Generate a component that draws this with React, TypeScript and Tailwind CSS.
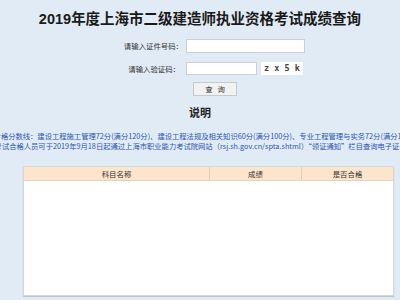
const cjk = { fontFamily: '"Noto Sans CJK SC", "Liberation Sans", sans-serif' };

const notes = [
  { text: "一、合格分数线：建设工程施工管理72分(满分120分)、建设工程法规及相关知识60分(满分100分)、专业工程管理与实务72分(满分120分)。", shift: "ml-[-21px]" },
  { text: "二、考试合格人员可于2019年9月18日起通过上海市职业能力考试院网站（rsj.sh.gov.cn/spta.shtml）“领证通知”栏目查询电子证书。", shift: "ml-[-20px]" },
];

export default function App() {
  return (
    <div className="h-[300px] w-[400px] overflow-hidden bg-[#e1ebf5] text-[#222]" style={cjk}>
      <h1 className="pt-[9px] text-center text-[14.5px] font-bold leading-[18px] text-[#1a1a1a]">
        <span style={{ fontFamily: '"Liberation Sans", sans-serif' }}>2019</span>年度上海市二级建造师执业资格考试成绩查询
      </h1>

      <div className="mt-[11px] flex flex-col gap-[9px]">
        <div className="flex items-center">
          <label className="w-[183px] text-right text-[7.4px] leading-[14px] text-[#333]">请输入证件号码：</label>
          <input className="ml-[3px] h-[14px] w-[119px] border border-[#c8d0d8] bg-white" />
        </div>
        <div className="flex items-center">
          <label className="w-[180px] text-right text-[7.4px] leading-[13px] text-[#333]">请输入验证码：</label>
          <input className="ml-[6px] h-[13px] w-[71px] border border-[#c8d0d8] bg-white" />
          <span className="ml-[4px] flex h-[13px] w-[42px] items-center justify-center whitespace-nowrap bg-white text-[8.5px] font-bold leading-[13px] text-[#444]" style={{ fontFamily: '"DejaVu Sans Mono", monospace' }}>z x 5 k</span>
        </div>
        <div className="ml-[193px] mt-[-2px]">
          <button className="block h-[14px] w-[44px] border border-[#c9c9c9] bg-[#f2f2f2] text-[7.4px] leading-[12px] text-[#333]">查&nbsp;&nbsp;&nbsp;询</button>
        </div>
      </div>

      <h2 className="mt-[9px] text-center text-[11px] font-bold leading-[14px] text-[#222]">说明</h2>

      <div className="mt-[13px] flex flex-col text-[7.3px] leading-[9.5px] text-[#2a56b4]">
        {notes.map((n) => (
          <p key={n.text} className={`whitespace-nowrap ${n.shift}`}>{n.text}</p>
        ))}
      </div>

      <div className="ml-[23px] mt-[15px] h-[130px] w-[371px] border border-[#d6d6d6] bg-white shadow-[0_1px_1px_rgba(0,0,0,0.15)]">
        <div className="grid grid-cols-[186px_92px_1fr] border-b border-[#e6d2bc] bg-[#fde5cc] text-center text-[7.4px] leading-[13px] text-[#333]">
          <div className="border-r border-[#e2cdb6]">科目名称</div>
          <div className="border-r border-[#e2cdb6]">成绩</div>
          <div>是否合格</div>
        </div>
      </div>
    </div>
  );
}
